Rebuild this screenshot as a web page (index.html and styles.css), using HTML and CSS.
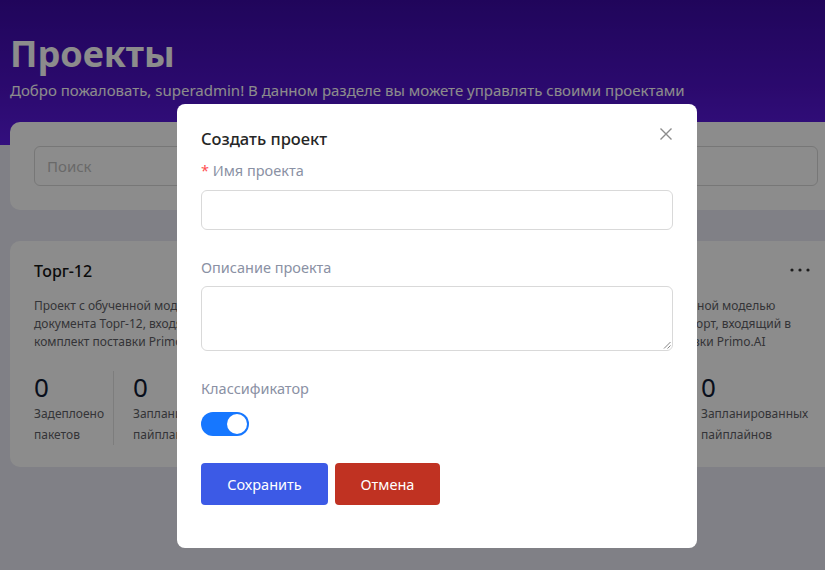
FILE: index.html
```html
<!DOCTYPE html>
<html lang="ru">
<head>
<meta charset="utf-8">
<title>Проекты</title>
<link rel="stylesheet" href="styles.css">
</head>
<body>
<div class="page">
  <header class="hero">
    <h1 class="hero-title">Проекты</h1>
    <p class="hero-sub">Добро пожаловать, superadmin! В данном разделе вы можете управлять своими проектами</p>
  </header>
  <div class="content">
    <section class="search-card">
      <div class="search-input">Поиск</div>
    </section>
    <section class="cards">
      <article class="card">
        <div class="card-head">
          <h2 class="card-title">Торг-12</h2>
          <svg class="dots" width="20" height="4" viewBox="0 0 20 4"><circle cx="2" cy="2" r="1.6" fill="#333"/><circle cx="10" cy="2" r="1.6" fill="#333"/><circle cx="18" cy="2" r="1.6" fill="#333"/></svg>
        </div>
        <p class="card-desc">Проект с обученной моделью документа Торг-12, входящий в комплект поставки Primo.AI</p>
        <div class="stats">
          <div class="stat"><div class="stat-num">0</div><div class="stat-label">Задеплоено<br>пакетов</div></div>
          <div class="stat-div"></div>
          <div class="stat"><div class="stat-num">0</div><div class="stat-label">Запланированных<br>пайплайнов</div></div>
        </div>
      </article>
      <article class="card"></article>
      <article class="card">
        <div class="card-head">
          <h2 class="card-title">Паспорт</h2>
          <svg class="dots" width="20" height="4" viewBox="0 0 20 4"><circle cx="2" cy="2" r="1.6" fill="#333"/><circle cx="10" cy="2" r="1.6" fill="#333"/><circle cx="18" cy="2" r="1.6" fill="#333"/></svg>
        </div>
        <p class="card-desc">Проект с обученной моделью документа Паспорт, входящий в комплект поставки Primo.AI</p>
        <div class="stats">
          <div class="stat"><div class="stat-num">0</div><div class="stat-label">Задеплоено<br>пакетов</div></div>
          <div class="stat-div"></div>
          <div class="stat"><div class="stat-num">0</div><div class="stat-label">Запланированных<br>пайплайнов</div></div>
        </div>
      </article>
    </section>
  </div>
</div>

<div class="mask">
  <div class="modal">
    <div class="modal-head">
      <h3 class="modal-title">Создать проект</h3>
      <svg class="close" width="14" height="14" viewBox="0 0 14 14"><path d="M1.5 1.5L12.5 12.5M12.5 1.5L1.5 12.5" stroke="#8c8c8c" stroke-width="1.4" fill="none"/></svg>
    </div>
    <label class="label"><span class="req">*</span> Имя проекта</label>
    <div class="input"></div>
    <label class="label label-gap">Описание проекта</label>
    <div class="textarea">
      <svg class="grip" width="8" height="8" viewBox="0 0 8 8"><path d="M7.5 1L1 7.5M7.5 4.5L4.5 7.5" stroke="#777" stroke-width="0.9" fill="none"/></svg>
    </div>
    <label class="label label-gap">Классификатор</label>
    <div class="switch"><span class="knob"></span></div>
    <div class="actions">
      <button class="btn btn-save">Сохранить</button>
      <button class="btn btn-cancel">Отмена</button>
    </div>
  </div>
</div>
</body>
</html>
```

FILE: styles.css
```css
* { box-sizing: border-box; }
html, body { margin: 0; padding: 0; }
body {
  width: 825px;
  height: 570px;
  overflow: hidden;
  background: #eaeaf4;
  font-family: "Noto Sans", "Open Sans", sans-serif;
  color: #1f1f1f;
}
.page { width: 860px; }
.hero {
  height: 145px;
  background: linear-gradient(180deg, #3b0aa6 0%, #4f12c8 60%, #5d1ce6 100%);
  padding: 30px 10px 0;
}
.hero-title {
  margin: 0;
  font-size: 36px;
  line-height: 48px;
  font-weight: 700;
  color: #fff;
}
.hero-sub {
  margin: 1px 0 0;
  font-size: 15px;
  line-height: 22px;
  color: #fff;
}
.content {
  margin-top: -23px;
  padding: 0 10px;
}
.search-card {
  width: 832px;
  height: 88px;
  background: #fff;
  border-radius: 10px;
  padding: 24px;
}
.search-input {
  height: 40px;
  border: 1px solid #d9d9d9;
  border-radius: 6px;
  padding: 0 12px;
  font-size: 15px;
  line-height: 38px;
  color: #bfbfbf;
}
.cards {
  margin-top: 31px;
  display: grid;
  grid-template-columns: repeat(3, 264px);
  gap: 20px;
}
.card {
  height: 226px;
  background: #fff;
  border-radius: 10px;
  padding: 18px 24px 24px;
}
.card-head {
  display: flex;
  justify-content: space-between;
  align-items: center;
  height: 24px;
}
.card-title {
  margin: 0;
  font-size: 16px;
  font-weight: 500;
  color: #141414;
}
.dots {
  margin-right: 8px;
  margin-top: -2px;
}
.card-desc {
  margin: 14px 0 0;
  font-size: 12px;
  line-height: 18px;
  color: #5f5f66;
  height: 54px;
}
.stats {
  margin-top: 20px;
  display: flex;
  align-items: stretch;
}
.stat { flex-shrink: 0; }
.stat-num {
  font-size: 26px;
  line-height: 32px;
  color: #0f1a33;
}
.stat-label {
  font-size: 12px;
  line-height: 21px;
  color: #5f5f66;
  white-space: nowrap;
}
.stat-div {
  flex-shrink: 0;
  width: 1px;
  background: #e3e3e3;
  margin: 0 19px 0 0;
}
.stat:first-child { width: 79px; }

.mask {
  position: fixed;
  inset: 0;
  background: rgba(0, 0, 0, 0.45);
  padding: 104px 0 0 177px;
}
.modal {
  width: 520px;
  height: 444px;
  background: #fff;
  border-radius: 8px;
  padding: 22px 24px 24px;
}
.modal-head {
  display: flex;
  justify-content: space-between;
  align-items: center;
  height: 24px;
}
.modal-title {
  margin: 0;
  font-size: 16.5px;
  font-weight: 500;
  color: #262626;
}
.close { margin-top: -8px; }
.label {
  display: block;
  margin-top: 10px;
  font-size: 14.5px;
  line-height: 20px;
  color: #8a91a4;
}
.label-gap { margin-top: 27px; }
.req { color: #ff4d4f; }
.input {
  margin-top: 10px;
  height: 40px;
  border: 1px solid #d9d9d9;
  border-radius: 6px;
}
.textarea {
  margin-top: 9px;
  height: 65px;
  border: 1px solid #d9d9d9;
  border-radius: 6px;
  position: relative;
}
.grip { position: absolute; right: 1px; bottom: 1px; }
.switch {
  margin-top: 14px;
  width: 48px;
  height: 24px;
  border-radius: 12px;
  background: #1677ff;
  display: flex;
  align-items: center;
  justify-content: flex-end;
  padding: 2px;
}
.knob {
  width: 20px;
  height: 20px;
  border-radius: 50%;
  background: #fff;
}
.actions {
  margin-top: 27px;
  display: flex;
  gap: 7px;
}
.btn {
  height: 42px;
  border: none;
  border-radius: 4px;
  color: #fff;
  font-family: inherit;
  font-size: 14.5px;
  padding: 0;
}
.btn-save { width: 127px; background: #3c5ae6; }
.btn-cancel { width: 105px; background: #c03222; }
```
